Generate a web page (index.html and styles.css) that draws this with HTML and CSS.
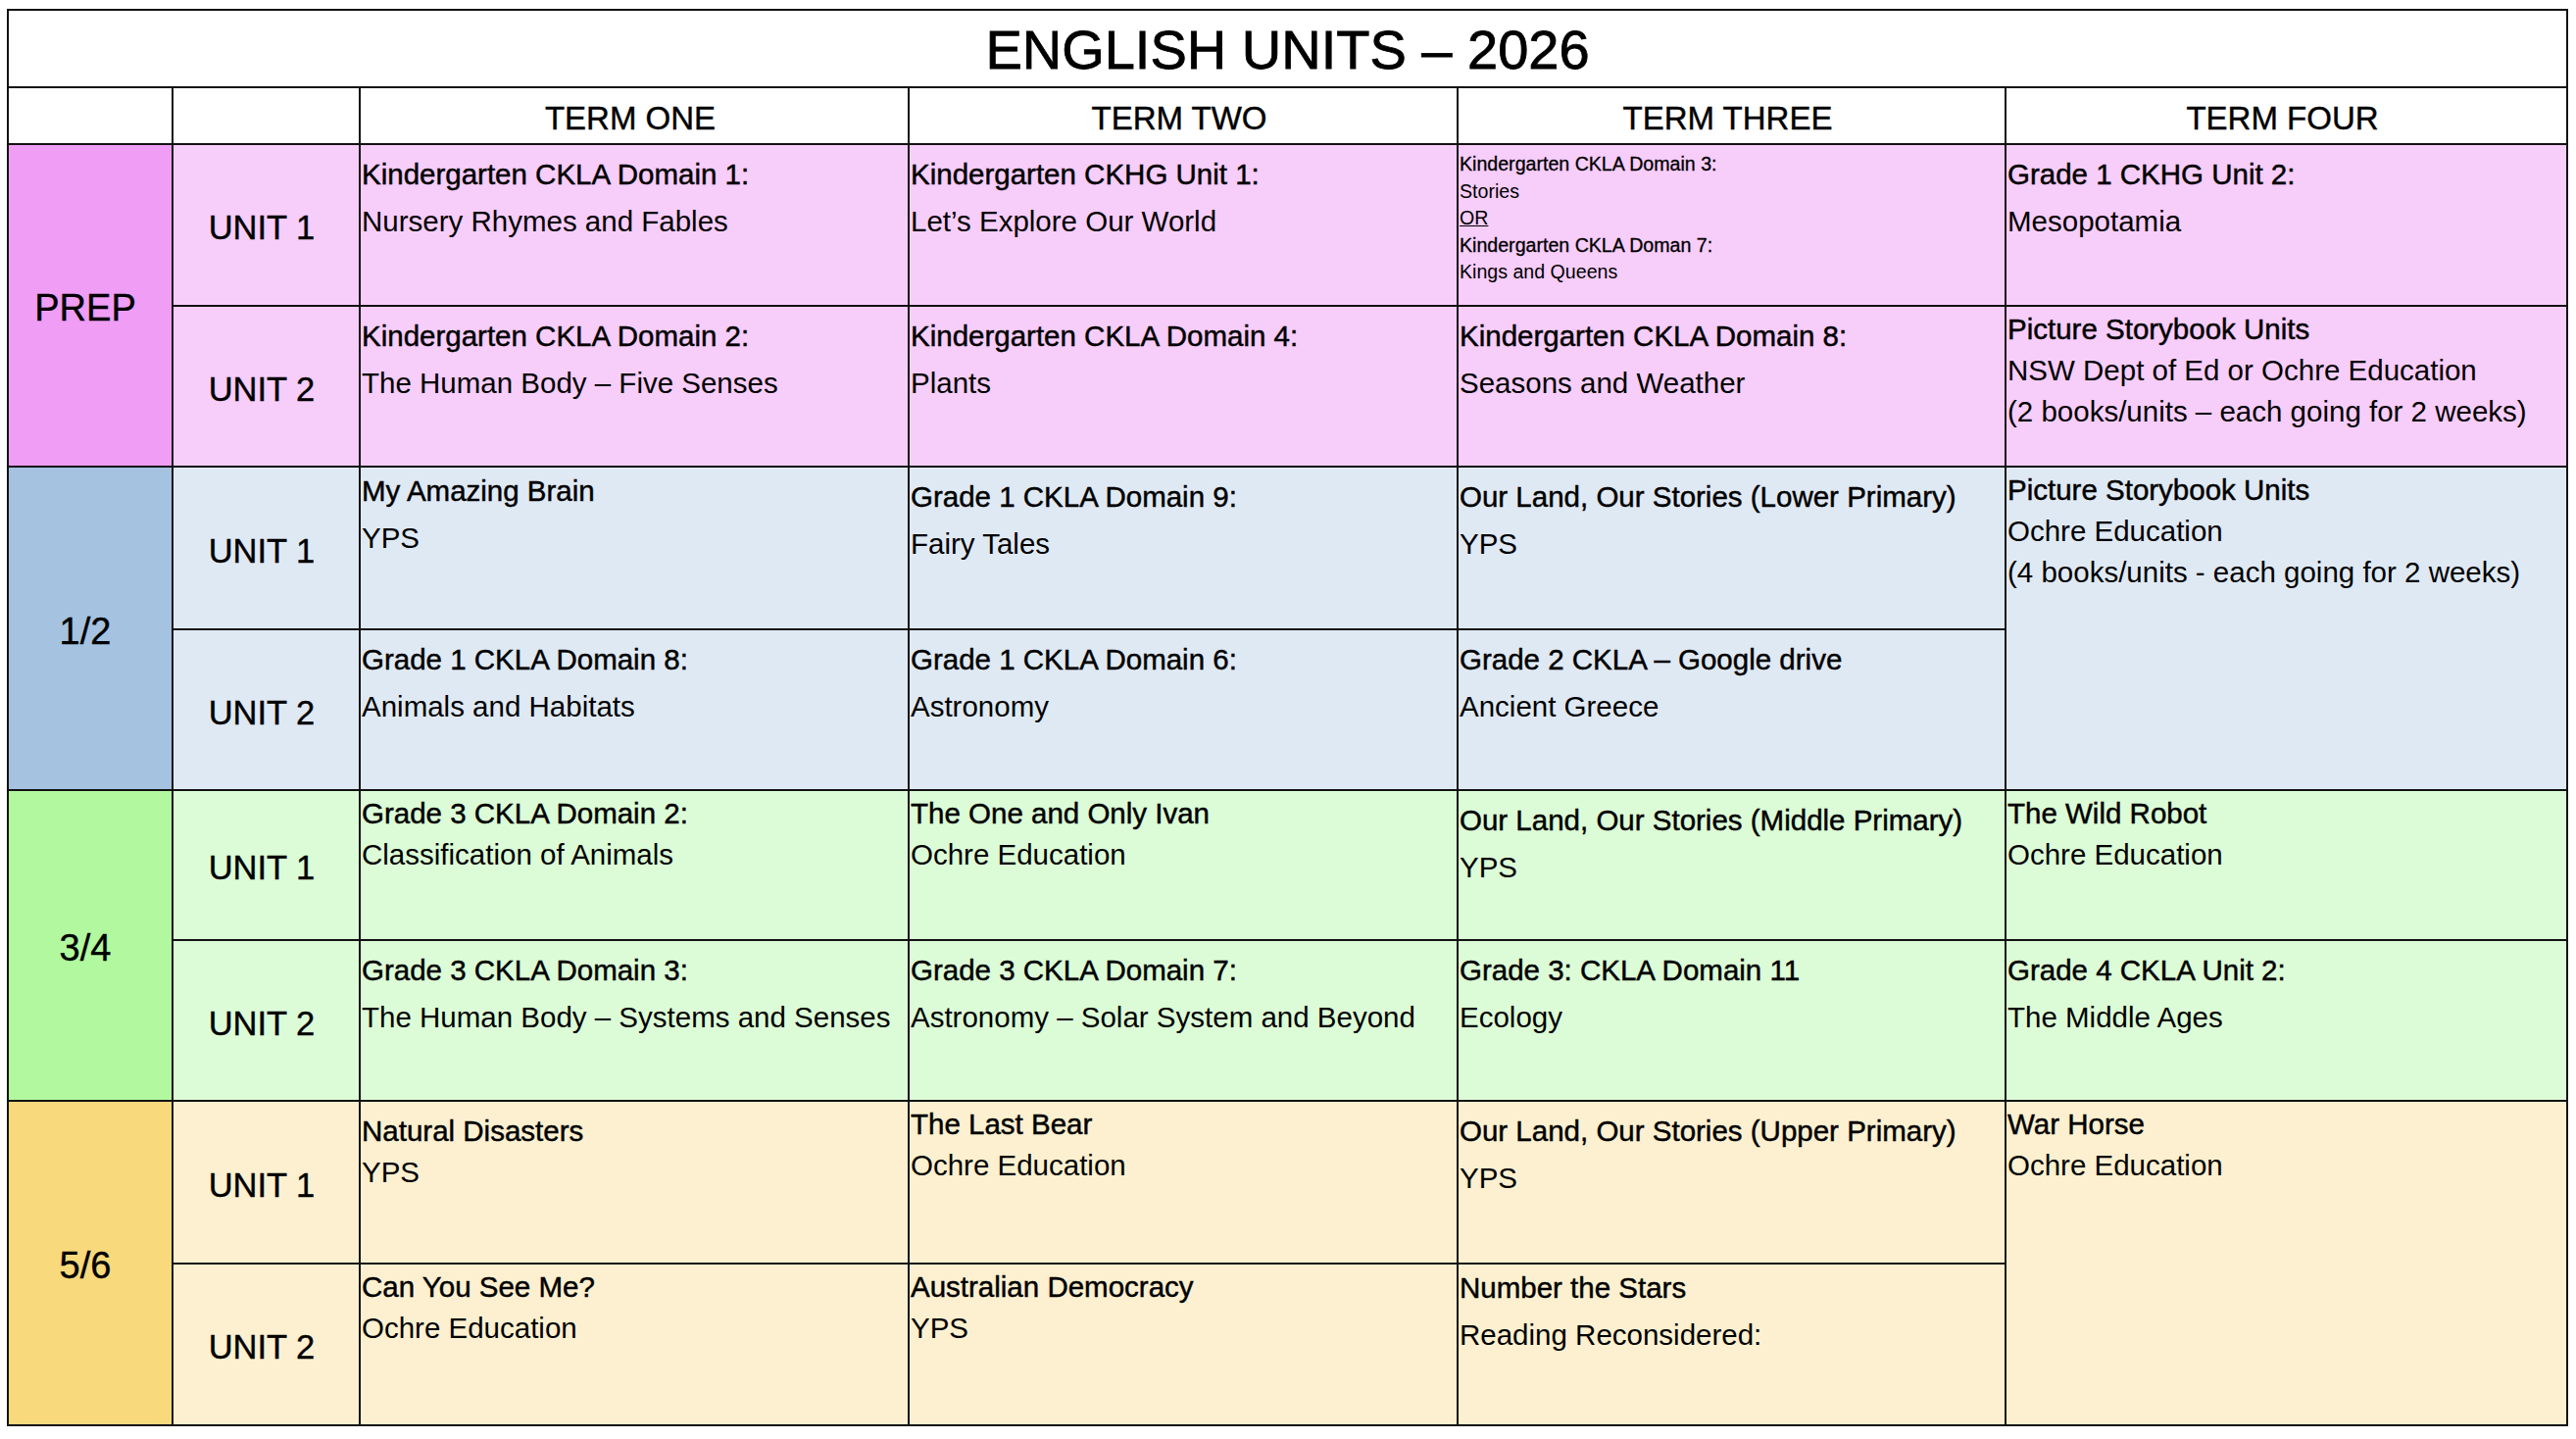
FILE: index.html
```html
<!DOCTYPE html>
<html lang="en">
<head>
<meta charset="utf-8">
<title>English Units – 2026</title>
<link rel="stylesheet" href="styles.css">
</head>
<body>
<div class="sheet">
  <div class="title">ENGLISH UNITS – 2026</div>

  <div class="head"></div>
  <div class="head"></div>
  <div class="head term">TERM ONE</div>
  <div class="head term">TERM TWO</div>
  <div class="head term">TERM THREE</div>
  <div class="head term">TERM FOUR</div>

  <!-- PREP -->
  <div class="year prep-y">PREP</div>
  <div class="unit prep">UNIT 1</div>
  <div class="cell prep a"><p class="t">Kindergarten CKLA Domain 1:</p><p>Nursery Rhymes and Fables</p></div>
  <div class="cell prep a"><p class="t">Kindergarten CKHG Unit 1:</p><p>Let’s Explore Our World</p></div>
  <div class="cell prep small"><p class="t">Kindergarten CKLA Domain 3:</p><p>Stories</p><p class="u">OR</p><p class="t">Kindergarten CKLA Doman 7:</p><p>Kings and Queens</p></div>
  <div class="cell prep a"><p class="t">Grade 1 CKHG Unit 2:</p><p>Mesopotamia</p></div>

  <div class="unit prep">UNIT 2</div>
  <div class="cell prep a"><p class="t">Kindergarten CKLA Domain 2:</p><p>The Human Body – Five Senses</p></div>
  <div class="cell prep a"><p class="t">Kindergarten CKLA Domain 4:</p><p>Plants</p></div>
  <div class="cell prep a"><p class="t">Kindergarten CKLA Domain 8:</p><p>Seasons and Weather</p></div>
  <div class="cell prep b"><p class="t">Picture Storybook Units</p><p>NSW Dept of Ed or Ochre Education</p><p>(2 books/units – each going for 2 weeks)</p></div>

  <!-- 1/2 -->
  <div class="year one-y">1/2</div>
  <div class="unit one">UNIT 1</div>
  <div class="cell one c"><p class="t">My Amazing Brain</p><p>YPS</p></div>
  <div class="cell one a"><p class="t">Grade 1 CKLA Domain 9:</p><p>Fairy Tales</p></div>
  <div class="cell one a"><p class="t">Our Land, Our Stories (Lower Primary)</p><p>YPS</p></div>
  <div class="cell one b span2"><p class="t">Picture Storybook Units</p><p>Ochre Education</p><p>(4 books/units - each going for 2 weeks)</p></div>

  <div class="unit one">UNIT 2</div>
  <div class="cell one a"><p class="t">Grade 1 CKLA Domain 8:</p><p>Animals and Habitats</p></div>
  <div class="cell one a"><p class="t">Grade 1 CKLA Domain 6:</p><p>Astronomy</p></div>
  <div class="cell one a"><p class="t">Grade 2 CKLA – Google drive</p><p>Ancient Greece</p></div>

  <!-- 3/4 -->
  <div class="year three-y">3/4</div>
  <div class="unit three">UNIT 1</div>
  <div class="cell three b"><p class="t">Grade 3 CKLA Domain 2:</p><p>Classification of Animals</p></div>
  <div class="cell three b"><p class="t">The One and Only Ivan</p><p>Ochre Education</p></div>
  <div class="cell three a"><p class="t">Our Land, Our Stories (Middle Primary)</p><p>YPS</p></div>
  <div class="cell three b"><p class="t">The Wild Robot</p><p>Ochre Education</p></div>

  <div class="unit three">UNIT 2</div>
  <div class="cell three a"><p class="t">Grade 3 CKLA Domain 3:</p><p>The Human Body – Systems and Senses</p></div>
  <div class="cell three a"><p class="t">Grade 3 CKLA Domain 7:</p><p>Astronomy – Solar System and Beyond</p></div>
  <div class="cell three a"><p class="t">Grade 3: CKLA Domain 11</p><p>Ecology</p></div>
  <div class="cell three a"><p class="t">Grade 4 CKLA Unit 2:</p><p>The Middle Ages</p></div>

  <!-- 5/6 -->
  <div class="year five-y">5/6</div>
  <div class="unit five">UNIT 1</div>
  <div class="cell five d"><p class="t">Natural Disasters</p><p>YPS</p></div>
  <div class="cell five b"><p class="t">The Last Bear</p><p>Ochre Education</p></div>
  <div class="cell five a"><p class="t">Our Land, Our Stories (Upper Primary)</p><p>YPS</p></div>
  <div class="cell five b span2"><p class="t">War Horse</p><p>Ochre Education</p></div>

  <div class="unit five">UNIT 2</div>
  <div class="cell five b"><p class="t">Can You See Me?</p><p>Ochre Education</p></div>
  <div class="cell five b"><p class="t">Australian Democracy</p><p>YPS</p></div>
  <div class="cell five c"><p class="t">Number the Stars</p><p>Reading Reconsidered:</p></div>
</div>
</body>
</html>
```

FILE: styles.css
```css
html, body {
  margin: 0;
  background: #ffffff;
}

body {
  padding: 9px 8px 0 7px;
  font-family: "Liberation Sans", Arial, sans-serif;
  color: #000000;
}

.sheet {
  box-sizing: border-box;
  width: 2613px;
  display: grid;
  grid-template-columns: 166px 189px 558px 558px 557px 571px;
  grid-template-rows: 77px 56px 163px 162px 164px 162px 151px 162px 164px 163px;
  gap: 2px;
  padding: 2px;
  background: #121212;
}

.title {
  grid-column: 1 / -1;
  background: #ffffff;
  display: flex;
  align-items: center;
  justify-content: center;
  font-size: 56px;
  -webkit-text-stroke: 0.8px #000;
  padding-top: 2px;
}

.head {
  background: #ffffff;
}

.term {
  display: flex;
  align-items: center;
  justify-content: center;
  font-size: 33px;
  padding: 5px 8px 0 0;
  -webkit-text-stroke: 0.4px #000;
}

.year {
  grid-row: span 2;
  display: flex;
  align-items: center;
  justify-content: center;
  font-size: 38px;
  padding: 6px 10px 0 0;
  -webkit-text-stroke: 0.4px #000;
}

.unit {
  display: flex;
  align-items: center;
  justify-content: center;
  font-size: 34.5px;
  padding: 6px 9px 0 0;
  -webkit-text-stroke: 0.4px #000;
}

.span2 {
  grid-row: span 2;
}

/* colours */
.prep-y { background: #ef9df5; }
.prep { background: #f7cdfa; }
.one-y { background: #a5c2e1; }
.one { background: #dfe9f4; }
.three-y { background: #b2f89f; }
.three { background: #dcfcd7; }
.five-y { background: #f8d97b; }
.five { background: #fcf0d0; }

/* content cells */
.cell {
  padding: 0 2px 0 1px;
  font-size: 29.5px;
  overflow: hidden;
}

.cell p {
  margin: 0;
  white-space: nowrap;
}

.cell .t {
  -webkit-text-stroke: 0.45px #000;
}

/* spacing patterns */
.a { padding-top: 6px; }
.a p { line-height: 48px; }

.b { padding-top: 2px; }
.b p { line-height: 42px; }

.c { padding-top: 0; }
.c p { line-height: 48px; }

.d { padding-top: 9px; }
.d p { line-height: 42px; }

.small {
  padding-top: 6px;
  font-size: 19.6px;
}

.small p {
  line-height: 27.6px;
}

.small .t {
  -webkit-text-stroke: 0.3px #000;
}

.u {
  text-decoration: underline;
}
```
